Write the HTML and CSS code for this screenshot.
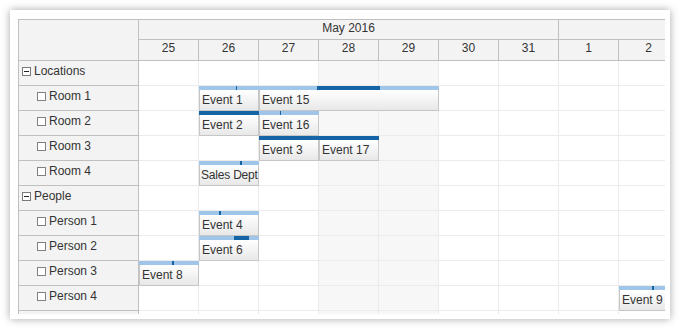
FILE: index.html
```html
<!DOCTYPE html>
<html>
<head>
<meta charset="utf-8">
<link rel="stylesheet" href="styles.css">
</head>
<body>
<div class="panel">
  <div class="scheduler">
    <div class="rowheaders">
      <div class="corner"></div>
      <div class="rh"><span class="expander"></span><span>Locations</span></div>
      <div class="rh child"><span class="chk"></span><span>Room 1</span></div>
      <div class="rh child"><span class="chk"></span><span>Room 2</span></div>
      <div class="rh child"><span class="chk"></span><span>Room 3</span></div>
      <div class="rh child"><span class="chk"></span><span>Room 4</span></div>
      <div class="rh"><span class="expander"></span><span>People</span></div>
      <div class="rh child"><span class="chk"></span><span>Person 1</span></div>
      <div class="rh child"><span class="chk"></span><span>Person 2</span></div>
      <div class="rh child"><span class="chk"></span><span>Person 3</span></div>
      <div class="rh child"><span class="chk"></span><span>Person 4</span></div>
      <div class="rh"></div>
    </div>
    <div class="main">
      <div class="months">
        <div class="month may">May 2016</div>
        <div class="month june"></div>
      </div>
      <div class="days">
        <div class="day">25</div><div class="day">26</div><div class="day">27</div><div class="day">28</div><div class="day">29</div><div class="day">30</div><div class="day">31</div><div class="day">1</div><div class="day">2</div>
      </div>

      <div class="row">
        <div class="cell"></div><div class="cell"></div><div class="cell"></div><div class="cell we"></div><div class="cell we"></div><div class="cell"></div><div class="cell"></div><div class="cell"></div><div class="cell"></div>
      </div>

      <div class="row">
        <div class="cell"></div><div class="cell"></div><div class="cell"></div><div class="cell we"></div><div class="cell we"></div><div class="cell"></div><div class="cell"></div><div class="cell"></div><div class="cell"></div>
        <div class="ev span1" style="left:60px"><div class="bar"><div class="fill" style="left:37px;width:1px"></div></div><div class="body">Event 1</div></div>
        <div class="ev span3" style="left:120px"><div class="bar"><div class="fill" style="left:58px;width:63px"></div></div><div class="body">Event 15</div></div>
      </div>

      <div class="row">
        <div class="cell"></div><div class="cell"></div><div class="cell"></div><div class="cell we"></div><div class="cell we"></div><div class="cell"></div><div class="cell"></div><div class="cell"></div><div class="cell"></div>
        <div class="ev span1" style="left:60px"><div class="bar"><div class="fill" style="left:0;width:60px"></div></div><div class="body">Event 2</div></div>
        <div class="ev span1" style="left:120px"><div class="bar"><div class="fill" style="left:21px;width:1px"></div></div><div class="body">Event 16</div></div>
      </div>

      <div class="row">
        <div class="cell"></div><div class="cell"></div><div class="cell"></div><div class="cell we"></div><div class="cell we"></div><div class="cell"></div><div class="cell"></div><div class="cell"></div><div class="cell"></div>
        <div class="ev span1" style="left:120px"><div class="bar"><div class="fill" style="left:0;width:60px"></div></div><div class="body">Event 3</div></div>
        <div class="ev span1" style="left:180px"><div class="bar"><div class="fill" style="left:0;width:60px"></div></div><div class="body">Event 17</div></div>
      </div>

      <div class="row">
        <div class="cell"></div><div class="cell"></div><div class="cell"></div><div class="cell we"></div><div class="cell we"></div><div class="cell"></div><div class="cell"></div><div class="cell"></div><div class="cell"></div>
        <div class="ev span1" style="left:60px"><div class="bar"><div class="fill" style="left:41px;width:2px"></div></div><div class="body tight">Sales Dept</div></div>
      </div>

      <div class="row">
        <div class="cell"></div><div class="cell"></div><div class="cell"></div><div class="cell we"></div><div class="cell we"></div><div class="cell"></div><div class="cell"></div><div class="cell"></div><div class="cell"></div>
      </div>

      <div class="row">
        <div class="cell"></div><div class="cell"></div><div class="cell"></div><div class="cell we"></div><div class="cell we"></div><div class="cell"></div><div class="cell"></div><div class="cell"></div><div class="cell"></div>
        <div class="ev span1" style="left:60px"><div class="bar"><div class="fill" style="left:20px;width:2px"></div></div><div class="body">Event 4</div></div>
      </div>

      <div class="row">
        <div class="cell"></div><div class="cell"></div><div class="cell"></div><div class="cell we"></div><div class="cell we"></div><div class="cell"></div><div class="cell"></div><div class="cell"></div><div class="cell"></div>
        <div class="ev span1" style="left:60px"><div class="bar"><div class="fill" style="left:35px;width:15px"></div></div><div class="body">Event 6</div></div>
      </div>

      <div class="row">
        <div class="cell"></div><div class="cell"></div><div class="cell"></div><div class="cell we"></div><div class="cell we"></div><div class="cell"></div><div class="cell"></div><div class="cell"></div><div class="cell"></div>
        <div class="ev span1" style="left:0"><div class="bar"><div class="fill" style="left:33px;width:2px"></div></div><div class="body">Event 8</div></div>
      </div>

      <div class="row">
        <div class="cell"></div><div class="cell"></div><div class="cell"></div><div class="cell we"></div><div class="cell we"></div><div class="cell"></div><div class="cell"></div><div class="cell"></div><div class="cell"></div>
        <div class="ev span1 last" style="left:480px"><div class="bar"><div class="fill" style="left:33px;width:2px"></div></div><div class="body">Event 9</div></div>
      </div>

      <div class="row">
        <div class="cell"></div><div class="cell"></div><div class="cell"></div><div class="cell we"></div><div class="cell we"></div><div class="cell"></div><div class="cell"></div><div class="cell"></div><div class="cell"></div>
      </div>
    </div>
  </div>
</div>
</body>
</html>
```
FILE: styles.css
```css
html, body {
  margin: 0;
  padding: 0;
  background: #ffffff;
}

body {
  font-family: "Liberation Sans", Arial, sans-serif;
  font-size: 12px;
  color: #333333;
}

.panel {
  margin: 10px;
  width: 660px;
  height: 309px;
  box-sizing: border-box;
  padding: 9px 5px 0 8px;
  background: #ffffff;
  box-shadow: 0 0 8px rgba(0, 0, 0, 0.35);
}

.scheduler {
  display: flex;
  width: 647px;
  height: 295px;
  box-sizing: border-box;
  overflow: hidden;
  border-top: 1px solid #c0c0c0;
  border-left: 1px solid #c0c0c0;
}

.rowheaders {
  flex: none;
  width: 120px;
  box-sizing: border-box;
  border-right: 1px solid #c0c0c0;
  background: #f3f3f3;
}

.corner {
  height: 41px;
  box-sizing: border-box;
  border-bottom: 1px solid #c0c0c0;
}

.rh {
  display: flex;
  align-items: flex-start;
  height: 25px;
  box-sizing: border-box;
  border-bottom: 1px solid #c0c0c0;
  padding: 3px 0 0 3px;
  line-height: 14px;
  white-space: nowrap;
}

.rh.child {
  padding-left: 18px;
}

.expander {
  flex: none;
  display: flex;
  align-items: center;
  justify-content: center;
  width: 9px;
  height: 9px;
  box-sizing: border-box;
  margin: 3px 3px 0 0;
  border: 1px solid #7a7a7a;
  background: #ffffff;
}

.expander::before {
  content: "";
  width: 5px;
  height: 1px;
  background: #222222;
}

.chk {
  flex: none;
  width: 9px;
  height: 9px;
  box-sizing: border-box;
  margin: 3px 3px 0 0;
  border: 1px solid #808080;
  background: #ffffff;
}

.main {
  flex: 1;
  min-width: 0;
  overflow: hidden;
}

.months,
.days {
  display: flex;
  background: #f3f3f3;
  box-sizing: border-box;
  border-bottom: 1px solid #c0c0c0;
}

.months {
  height: 20px;
}

.days {
  height: 21px;
}

.month {
  flex: none;
  box-sizing: border-box;
  border-right: 1px solid #c0c0c0;
  text-align: center;
  padding-top: 1px;
  line-height: 14px;
}

.month.may {
  width: 420px;
}

.month.june {
  width: 120px;
}

.day {
  flex: none;
  width: 60px;
  box-sizing: border-box;
  border-right: 1px solid #c0c0c0;
  text-align: center;
  padding-top: 1px;
  line-height: 14px;
}

.row {
  position: relative;
  display: flex;
  height: 25px;
}

.cell {
  flex: none;
  width: 60px;
  height: 25px;
  box-sizing: border-box;
  border-right: 1px solid #ebebeb;
  border-bottom: 1px solid #ebebeb;
  background: #ffffff;
}

.cell.we {
  background: #f7f7f7;
}

.ev {
  position: absolute;
  top: 0;
  height: 25px;
  display: flex;
  flex-direction: column;
}

.ev.span1 {
  width: 60px;
}

.ev.span1.last {
  width: 46px;
}

.ev.span3 {
  width: 180px;
}

.bar {
  position: relative;
  flex: none;
  height: 4px;
  background: #9fc6e8;
}

.fill {
  position: absolute;
  top: 0;
  bottom: 0;
  background: #1565a6;
}

.body {
  flex: 1;
  box-sizing: border-box;
  border: 1px solid #c6c6c6;
  border-top: none;
  background: linear-gradient(to bottom, #ffffff, #e8e8e8);
  padding: 3px 0 0 2px;
  line-height: 14px;
  white-space: nowrap;
  overflow: hidden;
  color: #333333;
}

.ev.last .body {
  border-right: none;
}

.body.tight {
  padding-left: 1px;
  letter-spacing: -0.2px;
}
```
